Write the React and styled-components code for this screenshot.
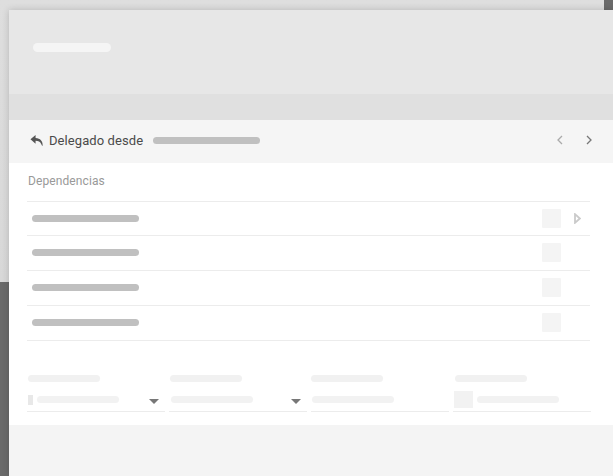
import React from "react";
import styled, { createGlobalStyle } from "styled-components";

const GlobalStyle = createGlobalStyle`
  html, body {
    margin: 0;
    height: 100%;
    overflow: hidden;
    font-family: Roboto, "Liberation Sans", sans-serif;
  }
`;

const rows = [0, 1, 2, 3];

const fields = [
  { id: "a", marker: "small", caret: true, inset: 1 },
  { id: "b", caret: true, inset: 1 },
  { id: "c", inset: 0 },
  { id: "d", marker: "large", inset: 2 },
];

const App = () => (
  <Page>
    <GlobalStyle />
    <Modal>
      <Header>
        <TitleBar />
      </Header>
      <Band />
      <SubHeader>
        <ReplyIcon viewBox="0 0 14 14">
          <path d="M6 1 .5 5.700 6 10.400V7.400c3 0 5 .9 6.200 3.600.4.900.9 1.700 1.300 2 .6-4.500-1.500-8.400-7.500-8.800z" />
        </ReplyIcon>
        <DelegatedText>Delegado desde</DelegatedText>
        <DelegatedBar />
        <Pager>
          <Chevron viewBox="0 0 6 10" $muted>
            <path d="M5 1 1 5l4 4" />
          </Chevron>
          <Chevron viewBox="0 0 6 10">
            <path d="m1 1 4 4-4 4" />
          </Chevron>
        </Pager>
      </SubHeader>
      <Body>
        <SectionTitle>Dependencias</SectionTitle>
        <RowList>
          {rows.map((row) => (
            <Row key={row}>
              <RowBar />
              <RowSquare />
              <PlaySlot>
                {row === 0 && (
                  <svg width="7" height="11" viewBox="0 0 7 11">
                    <path d="M1 1.200v8.600L5.800 5.500z" fill="none" stroke="#cacaca" strokeWidth="1.800" />
                  </svg>
                )}
              </PlaySlot>
            </Row>
          ))}
        </RowList>
        <FieldGrid>
          {fields.map((field) => (
            <Field key={field.id}>
              <FieldLabel $inset={field.inset} />
              <FieldControl>
                {field.marker && <Marker $size={field.marker} />}
                <FieldValue $inset={field.inset} $marker={field.marker} />
                {field.caret && <Caret />}
              </FieldControl>
            </Field>
          ))}
        </FieldGrid>
      </Body>
      <Footer />
    </Modal>
  </Page>
);

const Page = styled.div`
  box-sizing: border-box;
  width: 613px;
  height: 476px;
  padding: 10px 0 0 9px;
  overflow: hidden;
  background-color: #6a6a6a;
  background-image: linear-gradient(#dedede, #d8d8d8);
  background-repeat: no-repeat;
  background-size: 604px 282px;
`;

const Modal = styled.div`
  display: flex;
  flex-direction: column;
  height: 466px;
  background: #fff;
  box-shadow: 0 0 7px rgba(0, 0, 0, 0.18);
`;

const Header = styled.div`
  display: flex;
  align-items: center;
  height: 84px;
  padding: 0 0 0 24px;
  background: #e7e7e7;
`;

const TitleBar = styled.div`
  width: 78px;
  height: 9px;
  margin-top: -9px;
  border-radius: 5px;
  background: #f5f5f5;
`;

const Band = styled.div`
  height: 26px;
  background: #e0e0e0;
`;

const SubHeader = styled.div`
  box-sizing: border-box;
  display: flex;
  align-items: center;
  height: 43px;
  padding: 0 21px 3px 21px;
  background: #f5f5f5;
`;

const ReplyIcon = styled.svg`
  width: 13px;
  height: 13px;
  margin-right: 6px;
  fill: #555;
`;

const DelegatedText = styled.span`
  font-size: 13px;
  letter-spacing: 0.08px;
  color: #4a4a4a;
  white-space: nowrap;
`;

const DelegatedBar = styled.div`
  width: 107px;
  height: 7px;
  margin: 1px 0 0 10px;
  border-radius: 4px;
  background: #c0c0c0;
`;

const Pager = styled.div`
  display: flex;
  align-items: center;
  gap: 23px;
  margin-left: auto;
`;

const Chevron = styled.svg`
  width: 6px;
  height: 10px;
  fill: none;
  stroke: ${(p) => (p.$muted ? "#aaa" : "#777")};
  stroke-width: 1.300;
`;

const Body = styled.div`
  flex: 1;
  padding: 0 22px 0 18px;
`;

const SectionTitle = styled.div`
  box-sizing: border-box;
  height: 38px;
  padding: 11px 0 0 1px;
  font-size: 12px;
  line-height: 14px;
  letter-spacing: 0.1px;
  color: #999;
`;

const RowList = styled.div`
  border-top: 1px solid #ececec;
  margin-right: 1px;
`;

const Row = styled.div`
  display: flex;
  align-items: center;
  box-sizing: border-box;
  height: 35px;
  padding: 0 9px 1px 5px;
  border-bottom: 1px solid #ececec;

  &:first-child {
    height: 34px;
    padding-bottom: 0;
  }
`;

const RowBar = styled.div`
  width: 107px;
  height: 7px;
  border-radius: 4px;
  background: #c0c0c0;
`;

const RowSquare = styled.div`
  width: 19px;
  height: 19px;
  margin-left: auto;
  border-radius: 1px;
  background: #f4f4f4;
`;

const PlaySlot = styled.div`
  display: flex;
  justify-content: center;
  width: 7px;
  margin: -1px 0 0 13px;
`;

const FieldGrid = styled.div`
  display: grid;
  grid-template-columns: repeat(4, 138px);
  gap: 4px;
  margin-top: 34px;
`;

const Field = styled.div`
  display: flex;
  flex-direction: column;
`;

const FieldLabel = styled.div`
  width: 72px;
  height: 7px;
  margin-left: ${(p) => p.$inset}px;
  border-radius: 4px;
  background: #f1f1f1;
`;

const FieldControl = styled.div`
  display: flex;
  align-items: center;
  height: 23px;
  padding-top: 6px;
  border-bottom: 1px solid #ececec;
`;

const Marker = styled.div`
  flex: none;
  width: ${(p) => (p.$size === "large" ? 19 : 5)}px;
  height: ${(p) => (p.$size === "large" ? 17 : 10)}px;
  margin-left: 1px;
  background: ${(p) => (p.$size === "large" ? "#f2f2f2" : "#e8e8e8")};
`;

const FieldValue = styled.div`
  width: 82px;
  height: 7px;
  margin-left: ${(p) => (p.$marker ? 4 : p.$inset + 1)}px;
  border-radius: 4px;
  background: #f2f2f2;
`;

const Caret = styled.div`
  width: 0;
  height: 0;
  margin: 3px 6px 0 auto;
  border-left: 5px solid transparent;
  border-right: 5px solid transparent;
  border-top: 5px solid #777;
`;

const Footer = styled.div`
  height: 51px;
  background: #f4f4f4;
`;

export default App;
